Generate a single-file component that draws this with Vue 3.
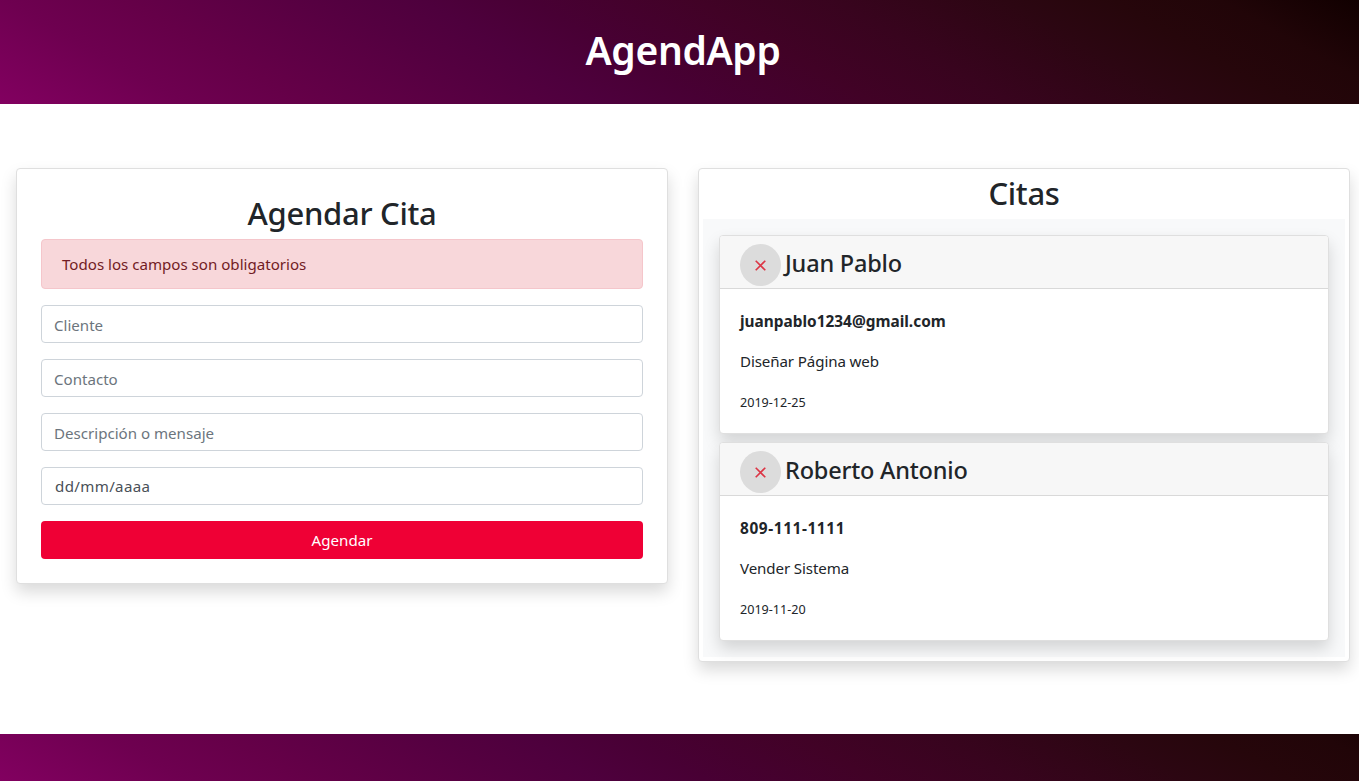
<script setup>
const fields = ['Cliente', 'Contacto', 'Descripción o mensaje']
const citas = [
  { nombre: 'Juan Pablo', contacto: 'juanpablo1234@gmail.com', mensaje: 'Diseñar Página web', fecha: '2019-12-25' },
  { nombre: 'Roberto Antonio', contacto: '809-111-1111', mensaje: 'Vender Sistema', fecha: '2019-11-20', telefono: true },
]
</script>

<template>
  <div class="page">
    <header class="banner top"><h1>AgendApp</h1></header>
    <main>
      <form class="card form" @submit.prevent>
        <h2>Agendar Cita</h2>
        <div class="alert">Todos los campos son obligatorios</div>
        <input v-for="f in fields" :key="f" class="control" type="text" :placeholder="f" />
        <div class="control date" tabindex="0">dd/mm/aaaa</div>
        <button class="submit">Agendar</button>
      </form>
      <section class="card list">
        <h2>Citas</h2>
        <div class="items">
          <article v-for="c in citas" :key="c.nombre" class="card cita">
            <div class="cita-head">
              <button class="close" aria-label="Eliminar">
                <svg width="11" height="11" viewBox="0 0 11 11"><path d="M0.7 0.7 L10.3 10.3 M10.3 0.7 L0.7 10.3" stroke="#dc3545" stroke-width="1.6" fill="none" /></svg>
              </button>
              <h3>{{ c.nombre }}</h3>
            </div>
            <div class="cita-body">
              <p class="contacto" :class="{ telefono: c.telefono }">{{ c.contacto }}</p>
              <p class="mensaje">{{ c.mensaje }}</p>
              <small>{{ c.fecha }}</small>
            </div>
          </article>
        </div>
      </section>
    </main>
    <footer class="banner bottom"></footer>
  </div>
</template>

<style>
body { background: #fff; overflow: hidden; }
</style>

<style scoped>
.page, .page * { box-sizing: border-box; }
.page {
  height: 781px;
  display: flex;
  flex-direction: column;
  font: 400 15.1px/24px "Segoe UI", "Noto Sans", "Open Sans", sans-serif;
  color: #212529;
}
h1, h2, h3, p { margin: 0; }
.banner {
  flex: none;
  background: linear-gradient(30deg, #820060 0%, #6e0050 12%, #650048 20%, #540040 33.5%, #4e003d 39%, #480034 46%, #410226 57%, #38041e 66%, #2c0612 77%, #26060b 84%, #210508 91%, #110000 100%) left bottom / 100% 104px no-repeat;
}
.top { height: 104px; padding-top: 26px; text-align: center; color: #fff; }
h1 { font-size: 39px; line-height: 48px; font-weight: 600; padding-left: 7px; letter-spacing: -.35px; }
main { flex: 1; display: flex; align-items: flex-start; gap: 30px; padding: 64px 9px 0 16px; }
.card { background: #fff; border: 1px solid #dfdfdf; border-radius: 4px; box-shadow: 0 8px 16px rgba(0, 0, 0, .15); }
.form { width: 652px; height: 416px; padding: 24px; display: flex; flex-direction: column; }
h2 { font-size: 31px; line-height: 38px; font-weight: 500; text-align: center; letter-spacing: -.3px; }
.form h2 { margin: 1px 0 7px; }
.alert { height: 50px; padding: 12px 20px; background: #f8d7da; border: 1px solid #f5c6cb; border-radius: 4px; color: #721c24; margin-bottom: 16px; }
.control { display: block; width: 100%; height: 38px; flex: none; padding: 7px 12px 5px; border: 1px solid #ced4da; border-radius: 4px; margin: 0 0 16px; font: inherit; color: #495057; background: #fff; }
.control::placeholder { color: #6c757d; opacity: 1; }
.date { padding: 6px 13px; letter-spacing: .35px; }
.submit { height: 38px; border: 0; border-radius: 4px; background: #ef0035; color: #fff; font: inherit; padding: 0; }
.list { width: 652px; height: 494px; padding: 4px; }
.list h2 { margin: 1px 0 7px; }
.items { background: #f8f9fa; height: 438px; padding: 16px; display: flex; flex-direction: column; gap: 8px; }
.cita { width: 610px; height: 199px; flex: none; overflow: hidden; }
.cita-head { height: 53px; display: flex; align-items: flex-start; gap: 4px; padding: 8px 20px 0; background: #f7f7f7; border-bottom: 1px solid #d9d9d9; }
.close { width: 41px; height: 42px; border: 0; border-radius: 50%; background: #dcdcdc; padding: 1px 1px 0 0; display: grid; place-items: center; }
h3 { font-size: 23.5px; line-height: 29px; font-weight: 500; margin-top: 5px; letter-spacing: -.2px; }
.cita-body { padding: 21px 20px 20px; display: flex; flex-direction: column; gap: 16px; }
.contacto { font-weight: 700; font-size: 15.4px; }
.telefono { letter-spacing: .6px; }
.mensaje { margin-top: -1px; letter-spacing: -.1px; }
small { font-size: 12.6px; padding-top: 2px; }
.bottom { height: 47px; }
</style>
